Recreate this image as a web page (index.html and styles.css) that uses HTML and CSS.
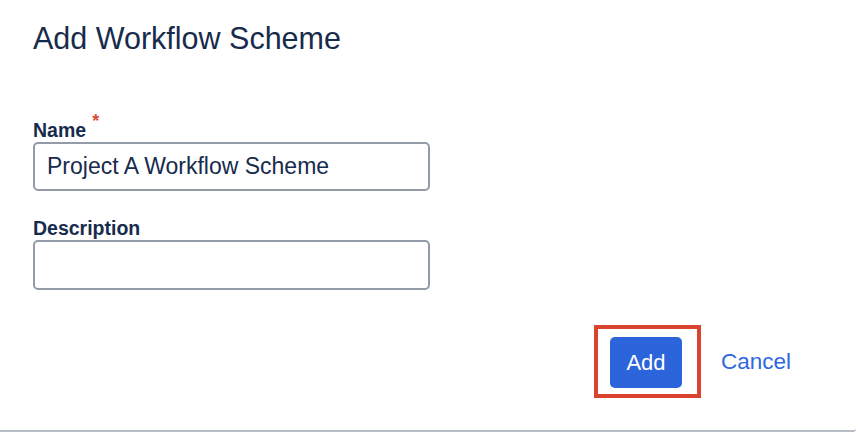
FILE: index.html
```html
<html><head>
    <meta charset="UTF-8">
    <meta name="viewport" content="width=device-width, initial-scale=1.0">
    <title>Add Workflow Scheme</title>
    <link rel="stylesheet" href="styles.css">
    </head>
    <body>
        <div class="dialog">
            <h1>Add Workflow Scheme</h1>
            <form class="scheme-form">
                <div class="field">
                    <label for="scheme-name">Name<span class="required">*</span></label>
                    <input type="text" id="scheme-name" class="text-input" value="Project A Workflow Scheme">
                </div>
                <div class="field">
                    <label for="scheme-desc">Description</label>
                    <input type="text" id="scheme-desc" class="text-input text-input-tall">
                </div>
                <div class="actions">
                    <div class="highlight">
                        <button type="button" class="add-button">Add</button>
                    </div>
                    <a href="#" class="cancel-link">Cancel</a>
                </div>
            </form>
        </div>
    </body>
    </html>
```

FILE: styles.css
```css
:root {
    /* Main color palette */
    --color-text: #172b4d;
    --color-border: #939aa8;
    --color-primary: #2c64dc;
    --color-link: #2f68de;
    --color-highlight: #d9432f;
    --color-required: #de4b35;
    --color-divider: #b7bcc6;
}

body {
    font-family: 'Liberation Sans', Arial, sans-serif;
    margin: 0;
    padding: 0;
    background-color: #fff;
    color: var(--color-text);
}

.dialog {
    box-sizing: border-box;
    width: 856px;
    height: 432px;
    padding: 20px 0 0 33px;
    border-bottom: 2px solid var(--color-divider);
    border-bottom-right-radius: 3px;
}

h1 {
    margin: 0;
    font-size: 30.5px;
    line-height: 36px;
    font-weight: 400;
}

.scheme-form {
    margin-top: 63px;
}

.field {
    margin-bottom: 26px;
}

.field label {
    display: block;
    font-size: 19.5px;
    line-height: 22px;
    font-weight: bold;
    margin-bottom: 1px;
}

.required {
    color: var(--color-required);
    font-size: 18px;
    line-height: 0;
    font-weight: bold;
    margin-left: 6px;
    vertical-align: 10px;
}

.text-input {
    box-sizing: border-box;
    display: block;
    width: 397px;
    height: 49px;
    margin: 0;
    padding: 0 12px;
    border: 2px solid var(--color-border);
    border-radius: 5px;
    font-family: inherit;
    font-size: 23px;
    color: var(--color-text);
    background: #fff;
    outline: none;
}

.text-input-tall {
    height: 50px;
}

.actions {
    display: flex;
    justify-content: flex-end;
    align-items: center;
    margin-top: 35px;
    padding-right: 65px;
}

.highlight {
    border: 4px solid var(--color-highlight);
    padding: 8px 15px 6px 12px;
}

.add-button {
    display: block;
    width: 72px;
    height: 51px;
    padding: 0;
    border: none;
    border-radius: 5px;
    background-color: var(--color-primary);
    color: #fff;
    font-family: inherit;
    font-size: 22px;
    cursor: pointer;
}

.cancel-link {
    margin-left: 20px;
    color: var(--color-link);
    font-size: 22.5px;
    text-decoration: none;
}
```
